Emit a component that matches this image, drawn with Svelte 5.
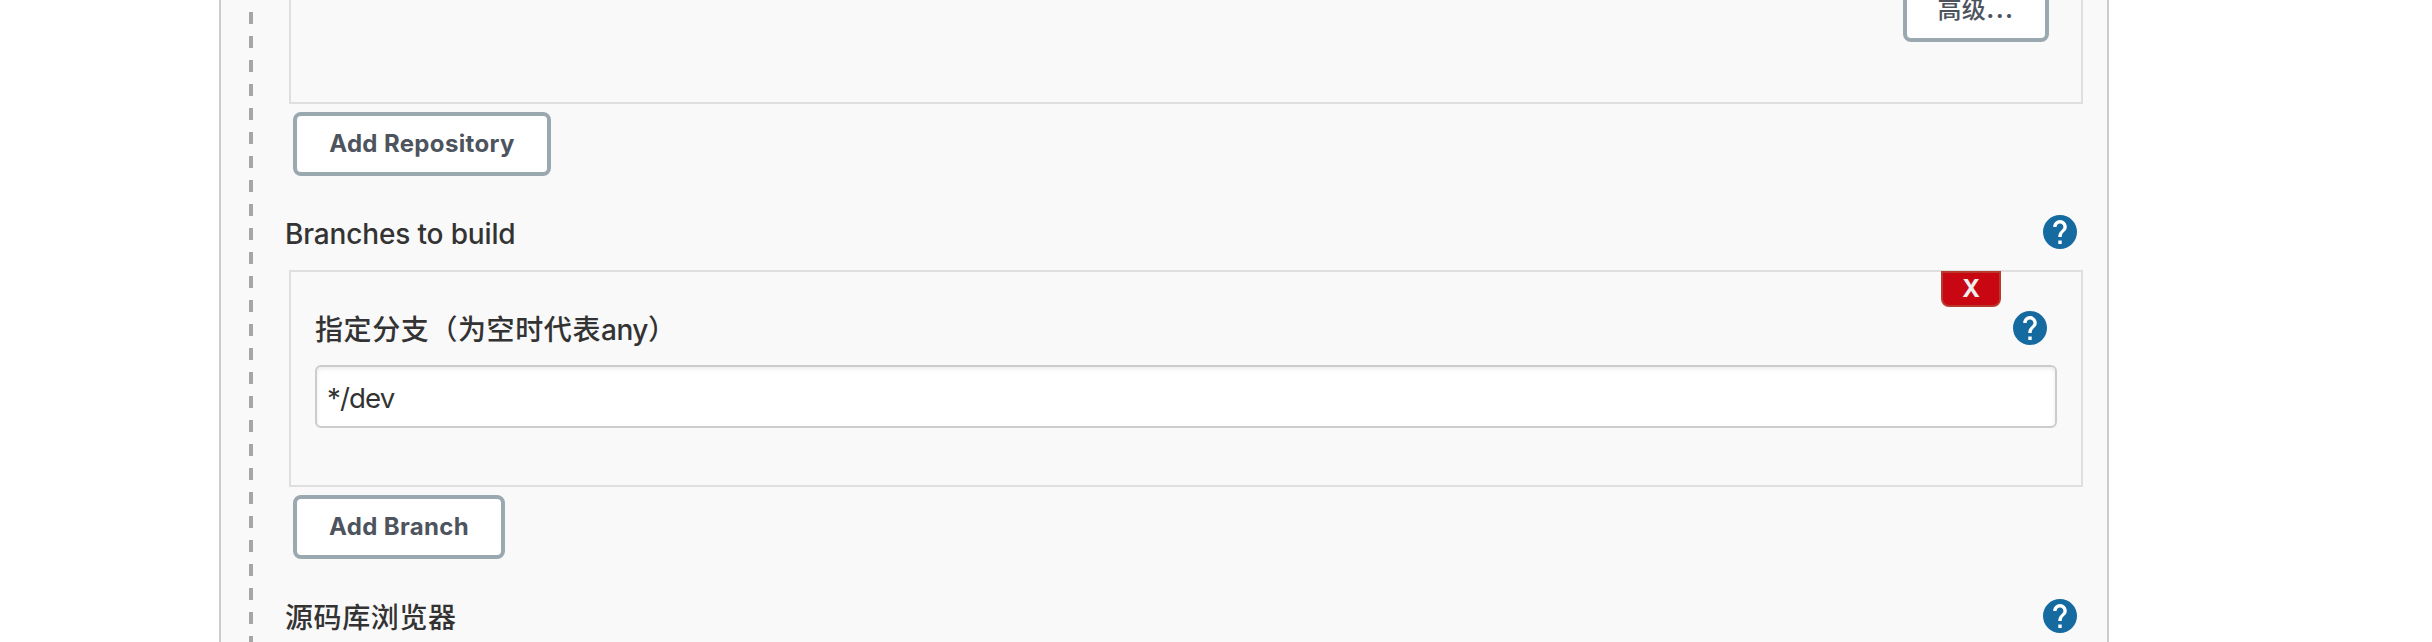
<script>
  let branch = $state('*/dev');
</script>

{#snippet help()}
  <a class="help" href="#help" aria-label="Help">
    <svg viewBox="2 2 20 20" width="34" height="34">
      <circle cx="12" cy="12" r="10" fill="#156aa0" />
      <path
        fill="#fff"
        d="M13 19h-2v-2h2v2zm2.07-7.75l-.9.92C13.45 12.9 13 13.5 13 15h-2v-.5c0-1.1.45-2.1 1.17-2.83l1.24-1.26c.37-.36.59-.86.59-1.41 0-1.1-.9-2-2-2s-2 .9-2 2H8c0-2.21 1.79-4 4-4s4 1.79 4 4c0 .88-.36 1.68-.93 2.25z"
      />
    </svg>
  </a>
{/snippet}

<main class="panel">
  <div class="rail"></div>
  <div class="content">
    <section class="box repository">
      <button class="btn advanced">高级<span class="dots">...</span></button>
    </section>
    <button class="btn add repo">Add Repository</button>

    <div class="heading first">
      <span class="label latin">Branches to build</span>
      {@render help()}
    </div>

    <section class="box branch">
      <button class="delete">X</button>
      <div class="field-head">
        <label class="label" for="branch">指定分支（为空时代表<span class="any">any</span>）</label>
        {@render help()}
      </div>
      <input id="branch" type="text" bind:value={branch} />
    </section>
    <button class="btn add br">Add Branch</button>

    <div class="heading second">
      <span class="label">源码库浏览器</span>
      {@render help()}
    </div>
  </div>
</main>

<style>
  :global(body) {
    background: #fff;
    overflow: hidden;
  }

  .panel,
  .panel * {
    box-sizing: border-box;
  }

  .panel {
    display: flex;
    width: 1890px;
    height: 642px;
    margin-left: 219px;
    padding-left: 28px;
    overflow: hidden;
    background: #f9f9f9;
    border: solid #ccc;
    border-width: 0 2px;
    color: #333;
    font-family: Inter, 'Noto Sans CJK SC', sans-serif;
  }

  .rail {
    flex: none;
    width: 4px;
    height: 642px;
    background: repeating-linear-gradient(to bottom, transparent 0 12px, #a6a6a6 12px 24px);
  }

  .content {
    display: flex;
    flex: 1;
    flex-direction: column;
    align-items: flex-start;
    padding: 0 24px 0 32px;
  }

  .box {
    flex: none;
    width: 1794px;
    margin-left: 4px;
    border: 2px solid #dfdfdf;
  }

  .repository {
    display: flex;
    justify-content: flex-end;
    height: 104px;
    padding-right: 32px;
    border-top: 0;
  }

  .btn {
    flex: none;
    height: 64px;
    padding: 0;
    background: #fff;
    border: 4px solid #9aa8af;
    border-radius: 8px;
    color: #4d545d;
    font: 700 24px/54px Inter, 'Noto Sans CJK SC', sans-serif;
    letter-spacing: 0.35px;
    white-space: nowrap;
  }

  .advanced {
    width: 146px;
    margin-top: -22px;
    font-weight: 500;
  }

  .dots {
    font-weight: 700;
    letter-spacing: 1.4px;
  }

  .add {
    margin: 8px 0 0 8px;
  }

  .repo {
    width: 258px;
  }

  .br {
    width: 212px;
  }

  .heading {
    display: flex;
    align-items: center;
    justify-content: space-between;
    flex: none;
    width: 1792px;
    height: 40px;
  }

  .first {
    margin-top: 36px;
    margin-bottom: 18px;
  }

  .second {
    margin-top: 37px;
  }

  .label {
    padding-top: 3px;
    font-size: 28px;
    font-weight: 450;
    line-height: 40px;
    letter-spacing: 0.6px;
    white-space: nowrap;
  }

  .latin {
    padding-top: 4px;
    letter-spacing: -0.15px;
  }

  .any {
    letter-spacing: -0.5px;
  }

  .help {
    display: block;
    width: 34px;
    height: 34px;
  }

  .help svg {
    display: block;
  }

  .branch {
    display: flex;
    flex-direction: column;
    height: 217px;
    padding: 0 24px;
  }

  .delete {
    align-self: flex-end;
    flex: none;
    width: 60px;
    height: 36px;
    margin: -1px 56px 0 0;
    padding: 0;
    background: #c80713;
    border: 2px solid #b83a2e;
    border-radius: 0 0 8px 8px;
    color: #eee;
    font: 700 24px/32px Inter, sans-serif;
  }

  .field-head {
    display: flex;
    align-items: center;
    justify-content: space-between;
    flex: none;
    height: 40px;
    margin-top: 1px;
    padding-right: 10px;
  }

  input {
    flex: none;
    width: 1742px;
    height: 63px;
    margin-top: 17px;
    padding: 3px 10px 0;
    background: #fff;
    border: 2px solid #ccc;
    border-radius: 6px;
    box-shadow: inset 0 2px 4px rgba(0, 0, 0, 0.08);
    color: #333;
    font: 400 27.7px/40px Inter, sans-serif;
    letter-spacing: -0.9px;
    outline: none;
  }
</style>
